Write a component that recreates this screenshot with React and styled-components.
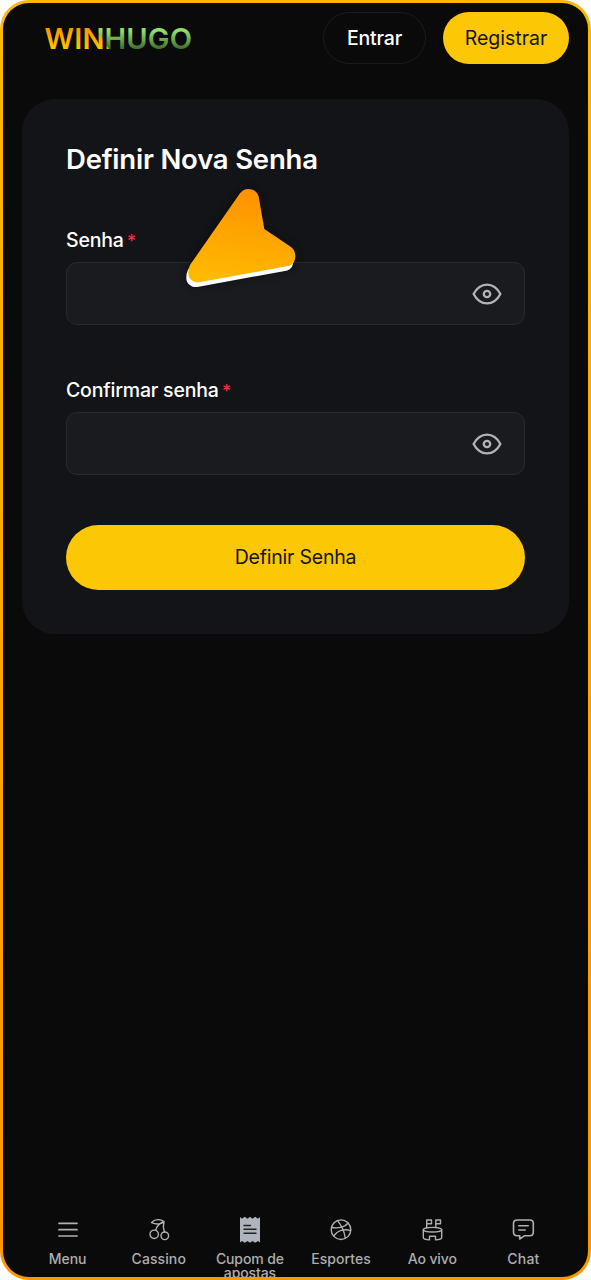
import React from "react";
import styled, { createGlobalStyle } from "styled-components";

const GlobalStyle = createGlobalStyle`
  * {
    box-sizing: border-box;
  }

  body {
    margin: 0;
    background-color: #ffffff;
    font-family: Inter, "Liberation Sans", sans-serif;
  }
`;

function Logo() {
  return (
    <LogoSvg viewBox="0 0 150 36">
      <defs>
        <linearGradient id="logoOrange" x1="0" y1="8" x2="0" y2="29" gradientUnits="userSpaceOnUse">
          <stop offset="0" stopColor="#ff9500" />
          <stop offset="1" stopColor="#ffc400" />
        </linearGradient>
        <linearGradient id="logoGreen" x1="0" y1="8" x2="0" y2="29" gradientUnits="userSpaceOnUse">
          <stop offset="0.15" stopColor="#92de68" />
          <stop offset="1" stopColor="#3f6a2d" />
        </linearGradient>
        <pattern id="logoFill" width="160" height="36" patternUnits="userSpaceOnUse">
          <rect width="160" height="36" fill="url(#logoGreen)" />
          <path d="M0 0H47L69 36H0Z" fill="url(#logoOrange)" />
        </pattern>
      </defs>
      <text x="0.5" y="28.5" textLength="147.5" fill="url(#logoFill)">
        WINHUGO
      </text>
    </LogoSvg>
  );
}

function EyeIcon() {
  return (
    <EyeSvg viewBox="0 0 30 22">
      <path d="M1.6 11C4.7 5.2 9.300 1.600 15 1.600S25.300 5.200 28.400 11C25.300 16.800 20.700 20.400 15 20.400S4.700 16.800 1.600 11Z" />
      <circle cx="15" cy="11" r="3.200" />
    </EyeSvg>
  );
}

function PasswordField({ label }) {
  return (
    <Field>
      <Label>
        {label} <Required>*</Required>
      </Label>
      <InputBox>
        <Input type="password" aria-label={label} />
        <EyeIcon />
      </InputBox>
    </Field>
  );
}

function Pointer() {
  const shape =
    "M60 9.3Q63.5 5 68.3 5C73.5 5 77.6 8 78.7 12.7L84.3 45L110.7 62.7C114 65 115.3 68.5 115.3 72C115.3 77.5 112.8 81 108.3 82L19.3 98.3C13.5 99 8.3 95 8.3 89.3Q8.2 85 10 81Z";
  return (
    <PointerSvg viewBox="0 0 122 110">
      <defs>
        <linearGradient id="pointerFill" x1="0.6" y1="0" x2="0.4" y2="1">
          <stop offset="0" stopColor="#ff9100" />
          <stop offset="1" stopColor="#ffba00" />
        </linearGradient>
      </defs>
      <path d={shape} fill="#ffffff" transform="translate(-2 4.7)" />
      <path d={shape} fill="url(#pointerFill)" />
    </PointerSvg>
  );
}

const MenuIcon = () => (
  <NavSvg viewBox="0 0 24 28">
    <path strokeWidth="1.7" d="M3 7.3H21M3 13.7H21M3 20H21" />
  </NavSvg>
);

const CherryIcon = () => (
  <NavSvg viewBox="0 0 24 28">
    <circle cx="7.2" cy="18.3" r="4.2" />
    <circle cx="17.8" cy="19.8" r="3.8" />
    <path d="M17 5.5C15 8.3 9.5 8.8 4.5 6.7C7.5 3 13.2 2.7 17 5.5ZM17 5.5C13 6.8 9.3 10.5 8.7 14.2M17 5.5C15.9 9.5 16.3 13 17.4 16" />
  </NavSvg>
);

const CouponIcon = () => (
  <NavSvg viewBox="0 0 24 28">
    <path
      d="M2 1L4 2.700L6.800 0.800L9.500 2.700L12 0.800L14.500 2.700L17.200 0.800L20 2.700L22 1V26.600L20 24.900L17.200 26.800L14.500 24.900L12 26.800L9.500 24.900L6.800 26.800L4 24.900L2 26.600Z"
      fill="#afb3bb"
      stroke="none"
    />
    <path d="M6 9.500H12.500M6 13.300H18M6 17.300H18" stroke="#202226" />
  </NavSvg>
);

const BallIcon = () => (
  <NavSvg viewBox="0 0 24 28">
    <circle cx="12" cy="13.7" r="9.8" />
    <path d="M2.6 11.5C10 12.7 16.500 10.700 19.200 7M8.500 4.600C13 10 15.500 16 16.300 22.300M4.800 20.200C8.500 14.200 15.500 12.500 21.600 14.600" />
  </NavSvg>
);

const StadiumIcon = () => (
  <NavSvg viewBox="0 0 24 28">
    <ellipse cx="12.500" cy="13.700" rx="9.200" ry="2.300" />
    <path d="M3.300 13.700V21.500C3.300 22.800 5.800 23.700 9.500 23.900V20.300H15.500V23.900C19.200 23.700 21.700 22.800 21.700 21.500V13.700M6.700 11.500V4H11.500V7.800H6.700M15.800 11.500V4H20.500V7.800H15.800" />
  </NavSvg>
);

const ChatIcon = () => (
  <NavSvg viewBox="0 0 24 28">
    <path
      strokeWidth="1.6"
      d="M6.3 4H18.800Q22.300 4 22.300 7.500V16Q22.300 19.700 18.800 19.700H13.800L8.700 23V19.700H6.300Q2.500 19.700 2.500 16V7.500Q2.500 4 6.300 4ZM7.800 9.700H17.200M7.800 14H14.200"
    />
  </NavSvg>
);

const navItems = [
  { label: "Menu", Icon: MenuIcon, spacing: 0 },
  { label: "Cassino", Icon: CherryIcon, spacing: 0.1 },
  { label: "Cupom de apostas", Icon: CouponIcon, spacing: -0.1 },
  { label: "Esportes", Icon: BallIcon, spacing: 0.08 },
  { label: "Ao vivo", Icon: StadiumIcon, spacing: -0.1 },
  { label: "Chat", Icon: ChatIcon, spacing: 0.2 },
];

function App() {
  return (
    <Frame>
      <GlobalStyle />
      <Screen>
        <Header>
          <Logo />
          <LoginButton>Entrar</LoginButton>
          <RegisterButton>Registrar</RegisterButton>
        </Header>
        <Card>
          <Title>Definir Nova Senha</Title>
          <PasswordField label="Senha" />
          <PasswordField label="Confirmar senha" />
          <SubmitButton>Definir Senha</SubmitButton>
          <Pointer />
        </Card>
        <BottomNav>
          {navItems.map(({ label, Icon, spacing }) => (
            <NavItem key={label}>
              <Icon />
              <NavLabel $spacing={spacing}>{label}</NavLabel>
            </NavItem>
          ))}
        </BottomNav>
      </Screen>
    </Frame>
  );
}

const Frame = styled.div`
  width: 591px;
  height: 1280px;
  padding: 3px;
  border-radius: 29px;
  background: linear-gradient(#ffb900, #ff9500);
`;

const Screen = styled.div`
  display: flex;
  flex-direction: column;
  height: 100%;
  padding: 9px 19px 0;
  overflow: hidden;
  border-radius: 26px;
  background-color: #0a0a0a;
`;

const Header = styled.header`
  display: flex;
  align-items: center;
  height: 52px;
  padding-left: 22px;
`;

const LogoSvg = styled.svg`
  width: 150px;
  height: 36px;
  margin-right: auto;
  overflow: visible;

  text {
    font-size: 29px;
    font-weight: 600;
  }
`;

const Button = styled.button`
  display: flex;
  align-items: center;
  justify-content: center;
  padding: 0;
  border: none;
  font-family: inherit;
  font-size: 19.5px;
  font-weight: 400;
  color: #14140c;
  background-color: #fcc705;
`;

const LoginButton = styled(Button)`
  width: 103px;
  height: 52px;
  border: 1px solid #1a1b20;
  border-radius: 26px;
  font-weight: 500;
  letter-spacing: -0.2px;
  color: #ffffff;
  background-color: transparent;
`;

const RegisterButton = styled(Button)`
  width: 126px;
  height: 52px;
  margin-left: 17px;
  border-radius: 26px;
`;

const Card = styled.main`
  position: relative;
  display: flex;
  flex-direction: column;
  height: 535px;
  margin-top: 35px;
  padding: 43px 44px 44px;
  border-radius: 33px;
  background-color: #131418;
`;

const Title = styled.h1`
  margin: 0;
  height: 34px;
  font-size: 27.5px;
  font-weight: 600;
  line-height: 34px;
  letter-spacing: -0.2px;
  color: #ffffff;
`;

const Field = styled.div`
  display: flex;
  flex-direction: column;
  gap: 8px;
  margin-top: 50px;

  & + & {
    margin-top: 51px;
  }
`;

const Label = styled.label`
  height: 28px;
  font-size: 19.5px;
  font-weight: 500;
  line-height: 28px;
  letter-spacing: -0.2px;
  color: #ffffff;
`;

const Required = styled.span`
  margin-left: -1.5px;
  font-size: 17.5px;
  color: #e43b3b;
`;

const InputBox = styled.div`
  display: flex;
  align-items: center;
  height: 63px;
  padding: 0 22.5px 0 22px;
  border: 1px solid #292a2f;
  border-radius: 11px;
  background-color: #1a1b1f;
`;

const Input = styled.input`
  flex: 1;
  min-width: 0;
  border: none;
  outline: none;
  color: #ffffff;
  background: transparent;
`;

const EyeSvg = styled.svg`
  width: 30px;
  height: 22px;
  fill: none;
  stroke: #b3b4b6;
  stroke-width: 2.3;
  stroke-linejoin: round;
`;

const SubmitButton = styled(Button)`
  height: 66px;
  margin-top: 49.5px;
  border-radius: 33px;
  letter-spacing: -0.2px;
`;

const PointerSvg = styled.svg`
  position: absolute;
  top: 85px;
  left: 158px;
  width: 122px;
  height: 110px;
  overflow: visible;
  filter: drop-shadow(0 0 4px rgba(0, 0, 0, 0.4));
`;

const BottomNav = styled.nav`
  display: grid;
  grid-template-columns: repeat(6, 1fr);
  height: 61px;
  margin-top: auto;
`;

const NavItem = styled.div`
  display: flex;
  flex-direction: column;
  align-items: center;
`;

const NavSvg = styled.svg`
  flex: none;
  width: 24px;
  height: 28px;
  fill: none;
  stroke: #b0b0b0;
  stroke-width: 1.4;
  stroke-linecap: round;
  stroke-linejoin: round;
`;

const NavLabel = styled.span`
  width: 76px;
  margin-top: 8px;
  font-size: 14px;
  font-weight: 500;
  line-height: 14px;
  letter-spacing: ${(props) => props.$spacing}px;
  text-align: center;
  color: #aeaeae;
`;

export default App;
